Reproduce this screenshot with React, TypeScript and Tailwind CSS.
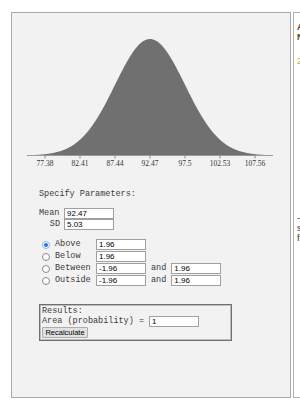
import React from 'react';

const MEAN = 92.47;
const SD = 5.03;
const CX = 138;
const SD_PX = 35;
const BASE = 142.5;
const PEAK = 116.5;

function curvePath() {
  let d = `M 15 ${BASE}`;
  for (let x = 15; x <= 261; x += 1) {
    const z = (x - CX) / SD_PX;
    const y = BASE - PEAK * Math.exp(-0.5 * z * z);
    d += ` L ${x} ${y.toFixed(2)}`;
  }
  d += ` L 261 ${BASE} Z`;
  return d;
}

function Field({ value, className = '' }: { value: string; className?: string }) {
  return (
    <div
      className={`w-[50px] h-[11px] shrink-0 bg-white border border-[#a0a0a0] pl-[2px] text-[8px] leading-[9px] text-black ${className}`}
      style={{ fontFamily: '"Liberation Sans", Arial, sans-serif' }}
    >
      {value}
    </div>
  );
}

function Radio({ checked }: { checked?: boolean }) {
  return checked ? (
    <span className="block w-[8px] h-[8px] rounded-full border border-[#8fb3ea] bg-white flex items-center justify-center">
      <span className="block w-[4px] h-[4px] rounded-full bg-[#2b6fd6]" />
    </span>
  ) : (
    <span className="block w-[8px] h-[8px] rounded-full border border-[#8a8a8a] bg-white" />
  );
}

const rows = [
  { label: 'Above', a: '1.96', checked: true },
  { label: 'Below', a: '1.96' },
  { label: 'Between', a: '-1.96', b: '1.96' },
  { label: 'Outside', a: '-1.96', b: '1.96' },
];

export default function App() {
  const ticks = [-3, -2, -1, 0, 1, 2, 3];
  const mono = { fontFamily: '"Liberation Mono", "Courier New", monospace' };

  return (
    <div className="w-[300px] h-[406px] bg-white flex pt-[12px] pl-[11px] gap-[2px] overflow-hidden">
      {/* Main panel */}
      <div className="w-[280px] h-[386px] shrink-0 border border-[#a8a8a8] bg-[#f2f2f2] flex flex-col text-[8.5px] text-[#3a3a3a]" style={mono}>
        {/* Chart */}
        <svg width="278" height="160" className="shrink-0">
          <path d={curvePath()} fill="#707070" />
          <line x1="15" y1={BASE} x2="261" y2={BASE} stroke="#9a9a9a" strokeWidth="1" />
          {ticks.map((k) => {
            const x = CX + k * SD_PX;
            const v = MEAN + k * SD;
            return (
              <g key={k}>
                <line x1={x} y1={BASE} x2={x} y2={BASE + 3} stroke="#8a8a8a" strokeWidth="1" />
                <text
                  x={x}
                  y={153}
                  textAnchor="middle"
                  fontSize="7.5"
                  fill="#333"
                  fontFamily='"Liberation Serif", "Times New Roman", serif'
                >
                  {parseFloat(v.toFixed(2))}
                </text>
              </g>
            );
          })}
        </svg>

        {/* Parameters */}
        <div className="pl-[27px] mt-[15px] flex flex-col">
          <div className="h-[12px] leading-[12px]">Specify Parameters:</div>

          <div className="mt-[8px] flex flex-col">
            <div className="flex items-center h-[11px]">
              <span className="w-[25px]">Mean</span>
              <Field value="92.47" />
            </div>
            <div className="flex items-center h-[11px]">
              <span className="w-[21px] text-right mr-[4px]">SD</span>
              <Field value="5.03" />
            </div>
          </div>

          <div className="mt-[9px] flex flex-col gap-[1px]">
            {rows.map((r) => (
              <div key={r.label} className="flex items-center h-[11px]">
                <span className="block ml-[3px] mr-[5px]">
                  <Radio checked={r.checked} />
                </span>
                <span className="w-[41px]">{r.label}</span>
                <Field value={r.a} />
                {r.b && (
                  <>
                    <span className="mx-[5px]">and</span>
                    <Field value={r.b} />
                  </>
                )}
              </div>
            ))}
          </div>

          {/* Results */}
          <div className="mt-[18px] w-[193px] h-[37px] border border-[#707070] shadow-[inset_0_0_0_1px_#bdbdbd] p-[1px] pl-[2px] flex flex-col">
            <div className="h-[10px] leading-[10px]">Results:</div>
            <div className="flex items-center h-[11px]">
              <span className="w-[107px]">Area (probability) =</span>
              <Field value="1" />
            </div>
            <div>
              <button
                className="block w-[46px] h-[11px] bg-[#e1e1e1] border border-[#adadad] rounded-[1px] text-[7.5px] leading-[9px] text-black p-0"
                style={{ fontFamily: '"Liberation Sans", Arial, sans-serif' }}
              >
                Recalculate
              </button>
            </div>
          </div>
        </div>
      </div>

      {/* Right panel (clipped) */}
      <div
        className="w-[200px] h-[386px] shrink-0 border border-[#b0b0b0] bg-white pl-[3px] text-[9px] text-[#5c3d12] flex flex-col"
        style={{ fontFamily: '"Liberation Sans", Arial, sans-serif' }}
      >
        <div className="mt-[9px] leading-[10px] font-bold">About</div>
        <div className="leading-[10px] font-bold">Normal</div>
        <div className="mt-[14px] leading-[10px] text-[#c9a94a]">2</div>
        <div className="mt-[147px] leading-[10px] text-[#333]">- The</div>
        <div className="leading-[10px] text-[#333]">shaded</div>
        <div className="leading-[10px] text-[#333]">from</div>
      </div>
    </div>
  );
}
